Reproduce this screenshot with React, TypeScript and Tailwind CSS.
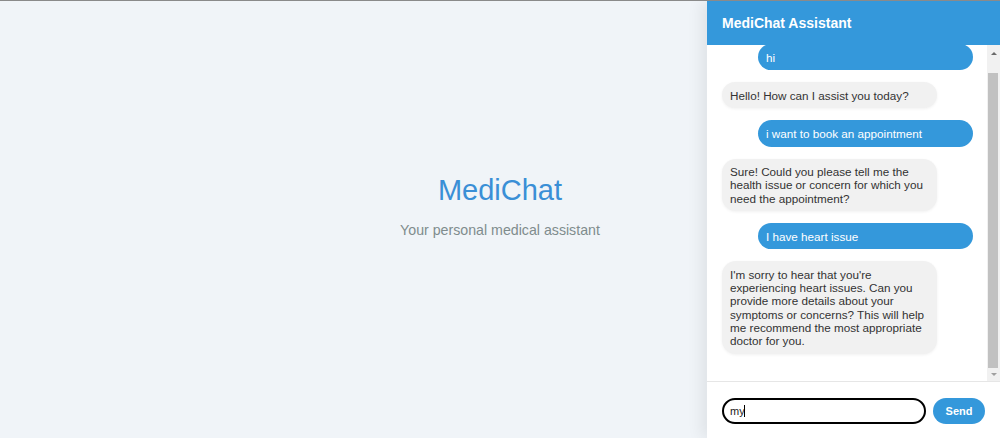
import { useEffect, useRef } from 'react'

type Msg = { role: 'user' | 'bot'; text: string }

const messages: Msg[] = [
  { role: 'user', text: 'hi' },
  { role: 'bot', text: 'Hello! How can I assist you today?' },
  { role: 'user', text: 'i want to book an appointment' },
  { role: 'bot', text: 'Sure! Could you please tell me the health issue or concern for which you need the appointment?' },
  { role: 'user', text: 'I have heart issue' },
  {
    role: 'bot',
    text: "I'm sorry to hear that you're experiencing heart issues. Can you provide more details about your symptoms or concerns? This will help me recommend the most appropriate doctor for you.",
  },
]

// classic-style scrollbar for the message list
function ScrollTrack() {
  return (
    <div className="w-[13px] shrink-0 bg-[#f1f1f1] flex flex-col">
      <div className="h-[17px] flex items-center justify-center">
        <span className="w-0 h-0 border-x-[3px] border-x-transparent border-b-[3px] border-b-[#6a6a6a]" />
      </div>
      <div className="h-[11px]" />
      <div className="flex-1 ml-[1px] mr-[2px] bg-[#c1c1c1]" />
      <div className="h-[13px] flex items-center justify-center">
        <span className="w-0 h-0 border-x-[3px] border-x-transparent border-t-[3px] border-t-[#a0a0a0]" />
      </div>
    </div>
  )
}

function ChatWidget() {
  const listRef = useRef<HTMLDivElement>(null)

  useEffect(() => {
    const el = listRef.current
    if (el) el.scrollTop = el.scrollHeight
  }, [])

  return (
    <div className="absolute top-0 right-0 bottom-0 w-[293px] bg-white flex flex-col shadow-[-6px_0_14px_rgba(0,0,0,0.07)]">
      <div className="h-[44px] shrink-0 bg-[#3498db] flex items-center px-[15px]">
        <h2 className="text-white font-bold text-[14px]">MediChat Assistant</h2>
      </div>

      <div className="flex-1 min-h-0 flex">
        <div ref={listRef} className="flex-1 overflow-hidden px-[15px] pt-[15px] pb-[15px]">
          {messages.map((m, i) => (
            <div
              key={i}
              className={`w-[215px] mb-3 px-2 py-[6.5px] rounded-[14px] text-[11.7px] leading-[13.2px] ${
                m.role === 'user'
                  ? 'ml-auto -mr-[1px] bg-[#3498db] text-white'
                  : 'bg-[#f1f1f1] text-[#333] shadow-[0_1px_3px_rgba(0,0,0,0.06)]'
              }`}
            >
              {m.text}
            </div>
          ))}
        </div>
        <ScrollTrack />
      </div>

      <div className="h-[57px] shrink-0 border-t border-[#e6e6e6] flex items-center gap-[7px] px-[15px] pt-[2px]">
        <div className="relative w-[204px] h-[26px]">
          <input
            readOnly
            value="my"
            className="w-full h-full border-2 border-black rounded-full px-[6px] text-[11px] text-[#222] outline-none"
          />
          <span className="absolute left-[22px] top-[7px] w-px h-[12px] bg-black" />
        </div>
        <button className="w-[52px] h-[26px] rounded-full bg-[#3498db] text-white text-[11px] font-bold">
          Send
        </button>
      </div>
    </div>
  )
}

export default function App() {
  return (
    <div
      className="relative h-[438px] w-full overflow-hidden bg-[#f0f4f8] border-t border-[#8a8a8a]"
      style={{ fontFamily: '"Liberation Sans", Arial, sans-serif' }}
    >
      <div className="h-full flex flex-col items-center justify-center pb-[22px]">
        <h1 className="text-[29px] text-[#3a8fd6] leading-none">MediChat</h1>
        <p className="mt-[15px] text-[14.2px] text-[#7f8c8d]">Your personal medical assistant</p>
      </div>
      <ChatWidget />
    </div>
  )
}
